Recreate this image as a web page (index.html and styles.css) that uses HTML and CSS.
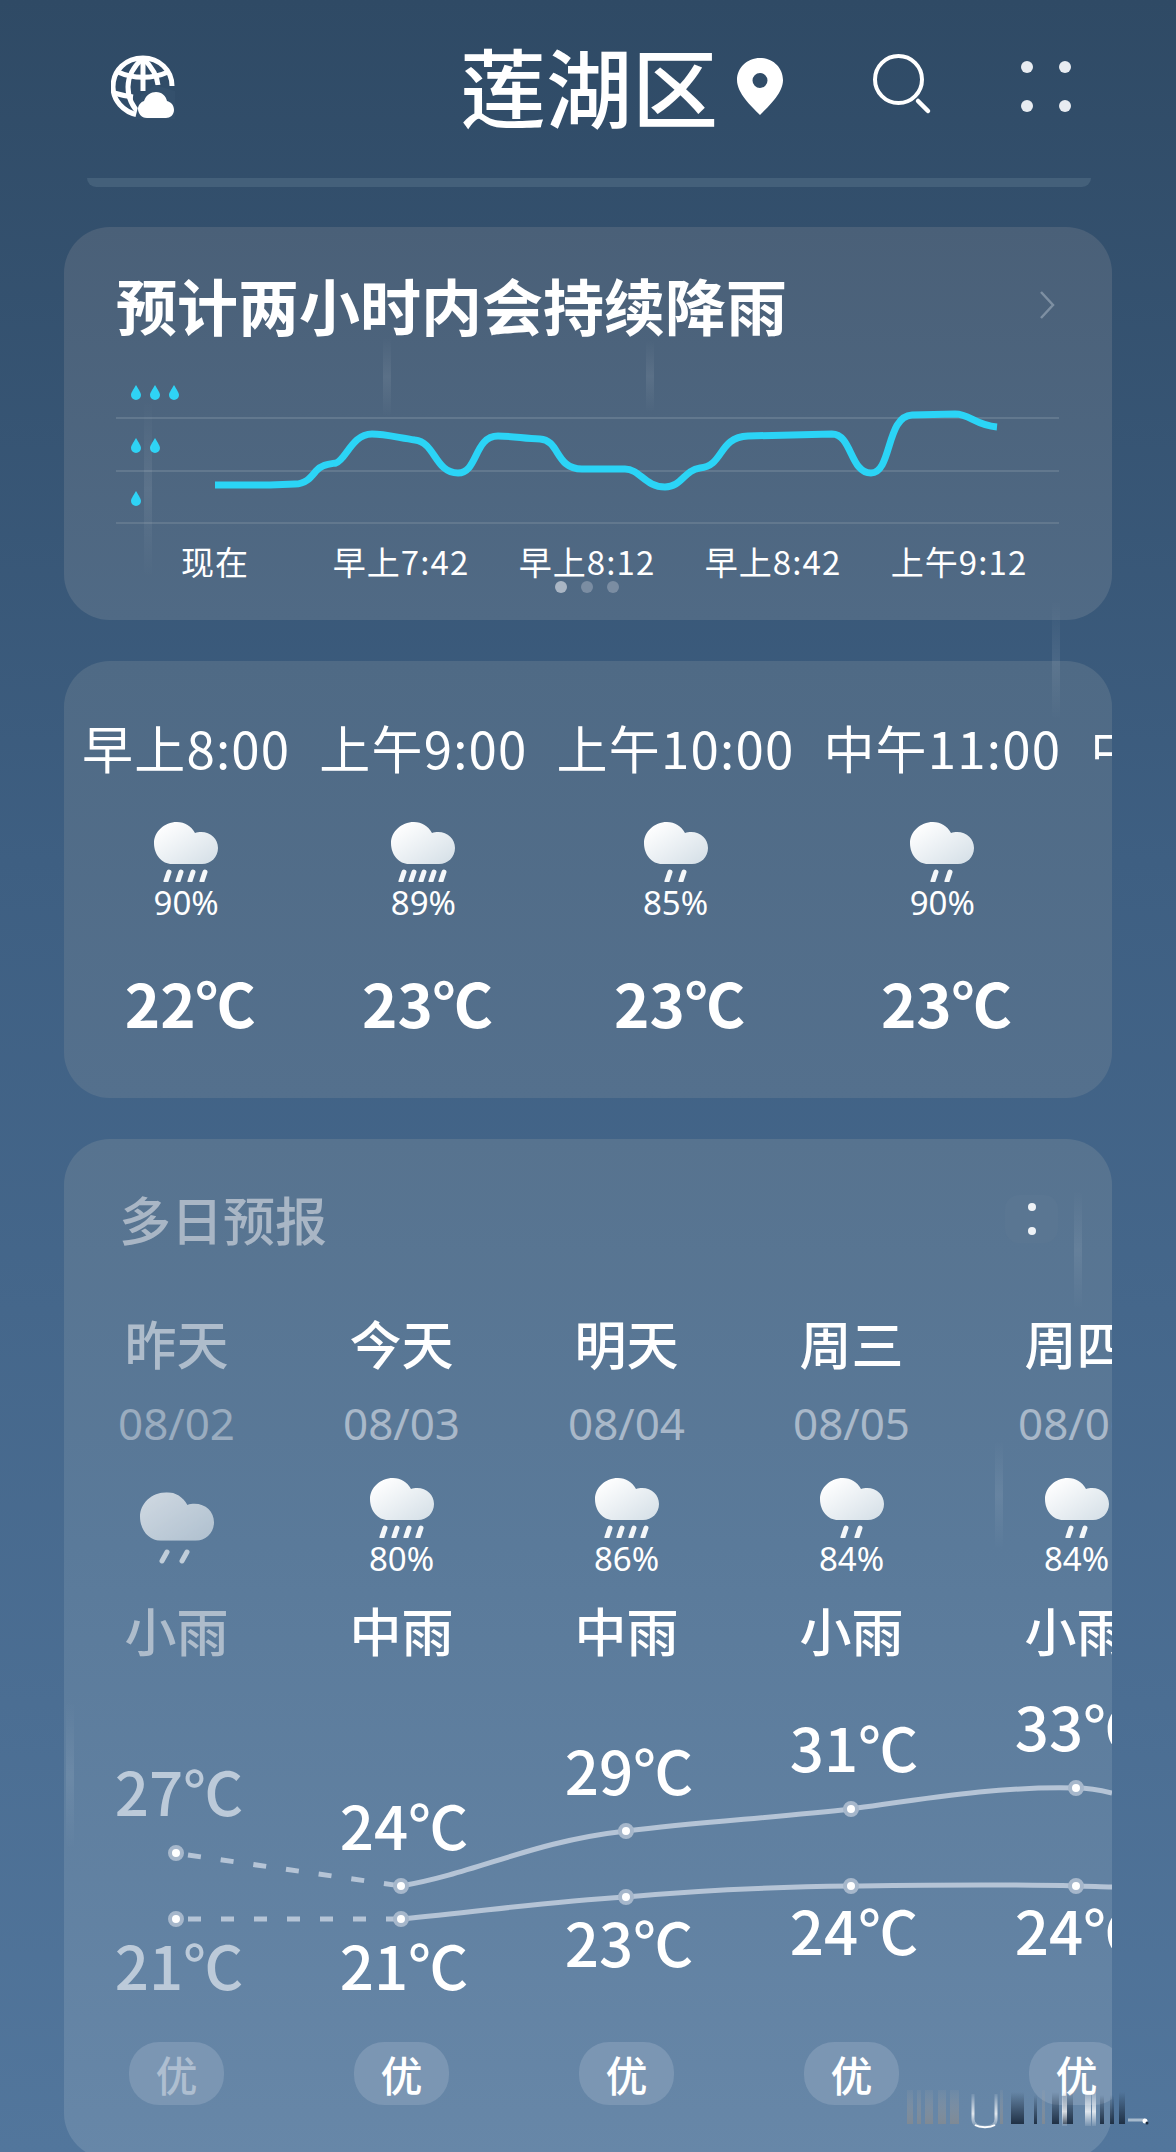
FILE: index.html
```html
<!DOCTYPE html>
<html lang="zh-CN">
<head>
  <meta charset="UTF-8">
  <meta name="viewport" content="width=device-width, initial-scale=1.0">
  <title>莲湖区天气</title>
  <link rel="stylesheet" href="styles.css">
</head>
<body>
  <svg class="defs" width="0" height="0">
    <defs>
      <linearGradient id="cloudFill" x1="0" y1="0" x2="1" y2="1">
        <stop offset="0.1" stop-color="#ffffff"/>
        <stop offset="1" stop-color="#d3dee6"/>
      </linearGradient>
      <linearGradient id="wmDark" x1="0" y1="0" x2="0" y2="1">
        <stop offset="0" stop-color="#1c2c40" stop-opacity="0"/>
        <stop offset="1" stop-color="#1c2c40" stop-opacity="0.95"/>
      </linearGradient>
      <linearGradient id="wmGrey" x1="0" y1="0" x2="0" y2="1">
        <stop offset="0" stop-color="#a8a8a8" stop-opacity="0.1"/>
        <stop offset="1" stop-color="#8b8b8b" stop-opacity="0.65"/>
      </linearGradient>
      <linearGradient id="wmLight" x1="0" y1="0" x2="0" y2="1">
        <stop offset="0" stop-color="#fff" stop-opacity="0.1"/>
        <stop offset="0.6" stop-color="#fff" stop-opacity="0.8"/>
        <stop offset="1" stop-color="#fff" stop-opacity="0.1"/>
      </linearGradient>
      <symbol id="cloud" viewBox="0 0 64 42">
        <path fill="url(#cloudFill)" d="M18 42C8 42 0 33 0 21C0 10 10 0 23 0C31 0 37 4 41 11C43 10 45 10 47 10C57 10 64 17 64 26C64 35 57 42 48 42Z"/>
      </symbol>
    </defs>
  </svg>

  <header class="topbar">
    <svg class="globe" width="64" height="64" viewBox="0 0 64 64">
      <g fill="none" stroke="#fff" stroke-width="5">
        <path d="M27 60C12 57 2 45 2 32C2 15 15 3 32 3C48 3 61 15 61 31"/>
        <path d="M32 3C22 12 17 22 17 32C17 42 21 52 30 60"/>
        <path d="M32 3C41 12 46 20 47 30"/>
        <path d="M7 17C22 24 42 24 57 17"/>
        <path d="M3 38C10 40 14 41 22 42"/>
        <path d="M32 3V36"/>
      </g>
      <path fill="#34506c" d="M24 64L30 40L44 30L64 36V64Z"/>
      <path fill="#fff" d="M36 63C30 63 27 58 27 54C27 50 30 47 33 46C35 40 40 37 45 37C51 37 55 41 56 46C60 47 63 50 63 55C63 60 59 63 55 63Z"/>
    </svg>
    <div class="place">
      <h1 class="place-name">莲湖区</h1>
      <svg width="48" height="58" viewBox="0 0 48 58">
        <path fill="#fff" fill-rule="evenodd" d="M24 0C37 0 47 10 47 22C47 35 33 48 24 57C15 48 1 35 1 22C1 10 11 0 24 0ZM24 15A7.500 7.500 0 1 0 24 30A7.500 7.500 0 1 0 24 15Z"/>
      </svg>
    </div>
    <svg class="search" width="62" height="62" viewBox="0 0 62 62">
      <circle cx="25.500" cy="25.500" r="23.500" fill="none" stroke="#fff" stroke-width="4"/>
      <path d="M45 47L55 57" stroke="#fff" stroke-width="4.500" stroke-linecap="round"/>
    </svg>
    <div class="grid-dots"><i></i><i></i><i></i><i></i></div>
  </header>

  <div class="sliver"></div>

  <section class="card rain-card">
    <div class="rain-head">
      <h2 class="rain-title">预计两小时内会持续降雨</h2>
      <svg width="16" height="30" viewBox="0 0 16 30"><path d="M2 2L14 15L2 28" fill="none" stroke="#7d8fa2" stroke-width="2.500"/></svg>
    </div>
    <svg class="rain-chart" width="944" height="136" viewBox="116 388 944 136">
      <g fill="#2fd3f5">
        <path id="d1" d="M136 385C139 390 141 393 141 395A5 5 0 0 1 131 395C131 393 133 390 136 385Z"/>
        <use href="#d1" x="19"/><use href="#d1" x="38"/>
        <use href="#d1" y="53"/><use href="#d1" x="19" y="53"/>
        <use href="#d1" y="106"/>
      </g>
      <g stroke="#62788e" stroke-width="2">
        <path d="M116 418H1059"/><path d="M116 471H1059"/><path d="M116 523H1059"/>
      </g>
      <path fill="none" stroke="#2bd4f6" stroke-width="7" d="M215 485H270L295 484C306 484 311 477 316 471C322 464 330 464 336 463C346 460 352 434 372 434C385 434 400 438 415 440C435 442 435 473 458 473C478 473 474 436 498 436C515 436 525 439 540 439C560 440 555 469 582 469L625 469C640 469 645 487 665 487C682 487 684 470 700 468C724 466 718 437 748 436L832 434C852 434 850 473 871 473C892 473 886 416 912 415L955 414C970 414 975 425 997 427"/>
    </svg>
    <div class="rain-times">
      <span>现在</span><span>早上7:42</span><span>早上8:12</span><span>早上8:42</span><span>上午9:12</span>
    </div>
    <div class="pager"><i class="on"></i><i></i><i></i></div>
  </section>

  <section class="card hours">
    <div class="hour">
      <div class="hour-time">早上8:00</div>
      <div class="wx">
        <svg class="cloud" width="64" height="42"><use href="#cloud"/></svg>
        <svg class="drops" width="64" height="13" viewBox="0 0 64 13"><path d="M12 12L15 3M24 12L27 3M36 12L39 3M48 12L51 3"/></svg>
        <div class="pct">90%</div>
      </div>
      <div class="hour-temp">22℃</div>
    </div>
    <div class="hour">
      <div class="hour-time">上午9:00</div>
      <div class="wx">
        <svg class="cloud" width="64" height="42"><use href="#cloud"/></svg>
        <svg class="drops" width="64" height="13" viewBox="0 0 64 13"><path d="M10 12L13 3M20 12L23 3M30 12L33 3M40 12L43 3M50 12L53 3"/></svg>
        <div class="pct">89%</div>
      </div>
      <div class="hour-temp">23℃</div>
    </div>
    <div class="hour">
      <div class="hour-time">上午10:00</div>
      <div class="wx">
        <svg class="cloud" width="64" height="42"><use href="#cloud"/></svg>
        <svg class="drops" width="64" height="13" viewBox="0 0 64 13"><path d="M23 12L26 3M37 12L40 3"/></svg>
        <div class="pct">85%</div>
      </div>
      <div class="hour-temp">23℃</div>
    </div>
    <div class="hour">
      <div class="hour-time">中午11:00</div>
      <div class="wx">
        <svg class="cloud" width="64" height="42"><use href="#cloud"/></svg>
        <svg class="drops" width="64" height="13" viewBox="0 0 64 13"><path d="M23 12L26 3M37 12L40 3"/></svg>
        <div class="pct">90%</div>
      </div>
      <div class="hour-temp">23℃</div>
    </div>
    <div class="hour">
      <div class="hour-time">中午12:00</div>
    </div>
  </section>

  <section class="card days">
    <div class="days-head">
      <h2 class="days-title">多日预报</h2>
      <div class="more"><i></i><i></i></div>
    </div>
    <div class="day-cols">
      <div class="day past">
        <div class="day-name">昨天</div>
        <div class="day-date">08/02</div>
        <div class="wx wx-day">
          <svg class="cloud" width="74" height="49" viewBox="0 0 64 42"><use href="#cloud" width="64" height="42"/></svg>
          <svg class="drops" width="74" height="16" viewBox="0 0 74 16"><path d="M22 13L27 4M42 13L47 4"/></svg>
        </div>
        <div class="day-wx">小雨</div>
      </div>
      <div class="day">
        <div class="day-name">今天</div>
        <div class="day-date">08/03</div>
        <div class="wx wx-day">
          <svg class="cloud" width="64" height="42"><use href="#cloud"/></svg>
          <svg class="drops" width="64" height="13" viewBox="0 0 64 13"><path d="M12 12L15 3M24 12L27 3M36 12L39 3M48 12L51 3"/></svg>
          <div class="pct">80%</div>
        </div>
        <div class="day-wx">中雨</div>
      </div>
      <div class="day">
        <div class="day-name">明天</div>
        <div class="day-date">08/04</div>
        <div class="wx wx-day">
          <svg class="cloud" width="64" height="42"><use href="#cloud"/></svg>
          <svg class="drops" width="64" height="13" viewBox="0 0 64 13"><path d="M12 12L15 3M24 12L27 3M36 12L39 3M48 12L51 3"/></svg>
          <div class="pct">86%</div>
        </div>
        <div class="day-wx">中雨</div>
      </div>
      <div class="day">
        <div class="day-name">周三</div>
        <div class="day-date">08/05</div>
        <div class="wx wx-day">
          <svg class="cloud" width="64" height="42"><use href="#cloud"/></svg>
          <svg class="drops" width="64" height="13" viewBox="0 0 64 13"><path d="M23 12L26 3M37 12L40 3"/></svg>
          <div class="pct">84%</div>
        </div>
        <div class="day-wx">小雨</div>
      </div>
      <div class="day">
        <div class="day-name">周四</div>
        <div class="day-date">08/06</div>
        <div class="wx wx-day">
          <svg class="cloud" width="64" height="42"><use href="#cloud"/></svg>
          <svg class="drops" width="64" height="13" viewBox="0 0 64 13"><path d="M23 12L26 3M37 12L40 3"/></svg>
          <div class="pct">84%</div>
        </div>
        <div class="day-wx">小雨</div>
      </div>
    </div>

    <svg class="temps" width="1048" height="300" viewBox="64 1700 1048 300">
      <g class="t-line dash">
        <path d="M188 1855L401 1886"/>
        <path d="M188 1919L401 1919"/>
      </g>
      <g class="t-line">
        <path d="M401 1886C480 1872 530 1842 626 1831C700 1822 770 1818 851 1809C930 1798 1000 1786 1076 1788C1090 1788 1100 1790 1112 1793"/>
        <path d="M401 1919C480 1912 540 1902 626 1897C700 1890 770 1887 851 1886C930 1885 1000 1884 1076 1886C1090 1886 1100 1887 1112 1887"/>
      </g>
      <g class="t-dots">
        <circle cx="176" cy="1853" r="6"/><circle cx="176" cy="1919" r="6"/>
        <circle cx="401" cy="1886" r="6"/><circle cx="401" cy="1919" r="6"/>
        <circle cx="626" cy="1831" r="6"/><circle cx="626" cy="1897" r="6"/>
        <circle cx="851" cy="1809" r="6"/><circle cx="851" cy="1886" r="6"/>
        <circle cx="1076" cy="1788" r="6"/><circle cx="1076" cy="1886" r="6"/>
      </g>
      <g class="t-text past-text">
        <text x="179" y="1816">27℃</text><text x="179" y="1990">21℃</text>
      </g>
      <g class="t-text">
        <text x="404" y="1850">24℃</text><text x="404" y="1990">21℃</text>
        <text x="629" y="1795">29℃</text><text x="629" y="1967">23℃</text>
        <text x="854" y="1772">31℃</text><text x="854" y="1955">24℃</text>
        <text x="1079" y="1751">33℃</text><text x="1079" y="1955">24℃</text>
      </g>
    </svg>

    <div class="aq-row">
      <div class="aq past">优</div>
      <div class="aq">优</div>
      <div class="aq">优</div>
      <div class="aq">优</div>
      <div class="aq">优</div>
    </div>
  </section>

  <div class="streak s1"></div>
  <div class="streak s2"></div>
  <div class="streak s3"></div>
  <div class="streak s4"></div>
  <div class="streak s5"></div>
  <div class="streak s6"></div>
  <div class="streak s7"></div>

  <svg class="watermark" width="246" height="44" viewBox="905 2086 246 44">
    <g fill="url(#wmGrey)">
      <rect x="907" y="2090" width="6" height="34"/><rect x="917" y="2090" width="4" height="34"/>
      <rect x="925" y="2090" width="8" height="34"/><rect x="938" y="2090" width="8" height="34"/>
      <rect x="950" y="2090" width="9" height="34"/><rect x="1000" y="2090" width="3" height="34"/>
      <rect x="1042" y="2090" width="3" height="34"/>
    </g>
    <g fill="url(#wmDark)">
      <rect x="1011" y="2092" width="13" height="32"/><rect x="1034" y="2095" width="3" height="29"/>
      <rect x="1052" y="2092" width="7" height="32"/><rect x="1063" y="2092" width="10" height="32"/>
      <rect x="1100" y="2095" width="4" height="29"/><rect x="1110" y="2095" width="4" height="29"/>
      <rect x="1119" y="2092" width="6" height="32"/>
    </g>
    <g fill="url(#wmLight)">
      <rect x="1062" y="2090" width="5" height="36"/><rect x="1085" y="2090" width="6" height="36"/>
      <rect x="1092" y="2090" width="4" height="36"/>
    </g>
    <path d="M973 2094V2119C973 2125 978 2127 985 2127C991 2127 996 2125 996 2119V2094" fill="none" stroke="url(#wmLight)" stroke-width="3"/>
    <path d="M975 2125C980 2128 990 2128 995 2125" fill="none" stroke="#fff" stroke-width="2"/>
    <path d="M1128 2120H1145" stroke="#dfe7ef" stroke-opacity="0.6" stroke-width="3"/>
    <circle cx="1145" cy="2121" r="2.500" fill="#fff"/>
    <circle cx="1147" cy="2123" r="1.500" fill="#1c2c40"/>
  </svg>
</body>
</html>
```

FILE: styles.css
```css
html, body {
  margin: 0;
  padding: 0;
}
body {
  width: 1176px;
  height: 2152px;
  overflow: hidden;
  position: relative;
  font-family: "Noto Sans CJK SC", "Noto Sans", sans-serif;
  color: #fff;
  background: linear-gradient(180deg, #2f4a65 0%, #3e5f82 40%, #52769c 100%);
}
h1, h2 {
  margin: 0;
}
.defs {
  position: absolute;
}
.topbar {
  height: 178px;
  display: flex;
  align-items: center;
  box-sizing: border-box;
  padding: 0 0 4px 111px;
}
.globe {
  flex: none;
}
.place {
  display: flex;
  align-items: center;
  gap: 18px;
  margin-left: 285px;
}
.place-name {
  font-size: 86px;
  line-height: 100px;
  font-weight: 500;
  margin-top: -5px;
}
.search {
  margin-left: 89px;
  margin-top: -4px;
}
.grid-dots {
  display: grid;
  grid-template-columns: 12px 12px;
  gap: 27px 26px;
  margin-left: 86px;
  margin-top: -2px;
}
.grid-dots i {
  width: 12px;
  height: 12px;
  border-radius: 50%;
  background: #e8ecf1;
}
.sliver {
  width: 1004px;
  height: 9px;
  margin-left: 87px;
  background: #44607a;
  border-radius: 0 0 30px 30px;
}
.card {
  width: 1048px;
  margin: 40px 0 0 64px;
  border-radius: 46px;
  overflow: hidden;
  box-sizing: border-box;
}
.rain-card {
  height: 393px;
  background: linear-gradient(180deg, #4a6078, #506a85);
  padding: 48px 0 0 52px;
  position: relative;
}
.rain-head {
  display: flex;
  align-items: center;
  justify-content: space-between;
  padding-right: 57px;
  height: 60px;
}
.rain-title {
  font-size: 61px;
  line-height: 60px;
  font-weight: 700;
  white-space: nowrap;
}
.rain-chart {
  display: block;
  margin-top: 53px;
  overflow: visible;
}
.rain-times {
  display: grid;
  grid-template-columns: repeat(5, 186px);
  margin: 14px 0 0 6px;
  font-size: 33px;
  letter-spacing: 1.100px;
  line-height: 46px;
  text-align: center;
  white-space: nowrap;
}
.pager {
  display: flex;
  gap: 14px;
  position: absolute;
  left: 491px;
  top: 354px;
}
.pager i {
  width: 12px;
  height: 12px;
  border-radius: 50%;
  background: #7b8da2;
}
.pager i.on {
  background: #aab6c4;
}
.hours {
  height: 437px;
  margin-top: 41px;
  background: linear-gradient(180deg, #4f6a85, #54708d);
  display: flex;
  gap: 29px;
  padding: 54px 0 0 18px;
  white-space: nowrap;
}
.hour {
  flex: none;
  display: flex;
  flex-direction: column;
  align-items: center;
}
.hour-time {
  font-size: 51px;
  letter-spacing: 1.200px;
  line-height: 64px;
}
.wx {
  display: flex;
  flex-direction: column;
  align-items: center;
  margin-top: 43px;
  height: 110px;
}
.cloud {
  display: block;
}
.drops {
  display: block;
  margin-top: 5px;
  fill: none;
  stroke: #f4f7f9;
  stroke-width: 5;
  stroke-linecap: round;
}
.pct {
  font-size: 33px;
  line-height: 40px;
  margin-top: 1px;
  font-family: "Noto Sans", sans-serif;
}
.hour-temp {
  font-size: 60px;
  line-height: 70px;
  font-weight: 700;
  margin: 35px 0 0 8px;
}
.days {
  height: 1020px;
  margin-top: 41px;
  background: linear-gradient(180deg, #57738f, #5a7a9a 40%, #6787a8 100%);
  position: relative;
}
.days-head {
  display: flex;
  align-items: center;
  justify-content: space-between;
  padding: 50px 54px 0 55px;
  height: 60px;
}
.days-title {
  font-size: 52px;
  line-height: 60px;
  font-weight: 500;
  color: #a9b6c5;
}
.more {
  width: 53px;
  height: 48px;
  border-radius: 14px;
  background: #5a7692;
  display: flex;
  flex-direction: column;
  align-items: center;
  justify-content: center;
  gap: 16px;
}
.more i {
  width: 8px;
  height: 8px;
  border-radius: 50%;
  background: #eef2f6;
}
.day-cols {
  display: flex;
  margin: 62px 0 0 0;
  white-space: nowrap;
  width: 1240px;
}
.day {
  width: 225px;
  display: flex;
  flex-direction: column;
  align-items: center;
}
.day-name {
  font-size: 52px;
  line-height: 64px;
  font-weight: 500;
}
.day-date {
  font-size: 44px;
  line-height: 50px;
  margin-top: 23px;
  color: #a9b8c9;
  font-family: "Noto Sans", sans-serif;
}
.wx-day {
  margin-top: 30px;
  height: 121px;
}
.day-wx {
  font-size: 52px;
  line-height: 64px;
  font-weight: 500;
  margin-top: -1px;
}
.past .day-name, .past .day-wx {
  color: #aebccb;
}
.past .day-date {
  color: #9aacbf;
}
.past .cloud {
  margin-top: 14px;
  opacity: 0.7;
}
.past .drops {
  margin-top: 7px;
  stroke: #c0cdd9;
}
.temps {
  display: block;
  position: absolute;
  left: 0;
  top: 561px;
}
.t-line path {
  fill: none;
  stroke: #b5c4d6;
  stroke-width: 5;
}
.t-line.dash path {
  stroke-dasharray: 13 20;
}
.t-dots circle {
  fill: #fff;
  stroke: #a6b7cb;
  stroke-width: 4;
}
.t-text text {
  fill: #fff;
  font-size: 60px;
  font-weight: 500;
  text-anchor: middle;
}
.past-text text {
  fill: #bccad9;
}
.aq-row {
  position: absolute;
  left: 65px;
  top: 903px;
  display: flex;
  gap: 130px;
}
.aq {
  width: 95px;
  height: 63px;
  border-radius: 30px;
  background: #7b96b3;
  font-size: 42px;
  line-height: 63px;
  text-align: center;
  flex: none;
  font-weight: 500;
}
.aq.past {
  color: #aebed0;
}
/* faint rain on the glass */
.streak {
  position: absolute;
  width: 8px;
  border-radius: 4px;
  background: linear-gradient(180deg, rgba(255,255,255,0), rgba(255,255,255,0.08), rgba(255,255,255,0));
  pointer-events: none;
}
.s1 { left: 383px; top: 337px; height: 80px; }
.s2 { left: 646px; top: 340px; height: 72px; }
.s3 { left: 144px; top: 400px; height: 178px; }
.s4 { left: 1052px; top: 600px; height: 120px; }
.s5 { left: 1074px; top: 1190px; height: 120px; }
.s6 { left: 995px; top: 1440px; height: 110px; }
.s7 { left: 66px; top: 1700px; height: 150px; }
.watermark {
  position: absolute;
  left: 905px;
  top: 2086px;
}
```
